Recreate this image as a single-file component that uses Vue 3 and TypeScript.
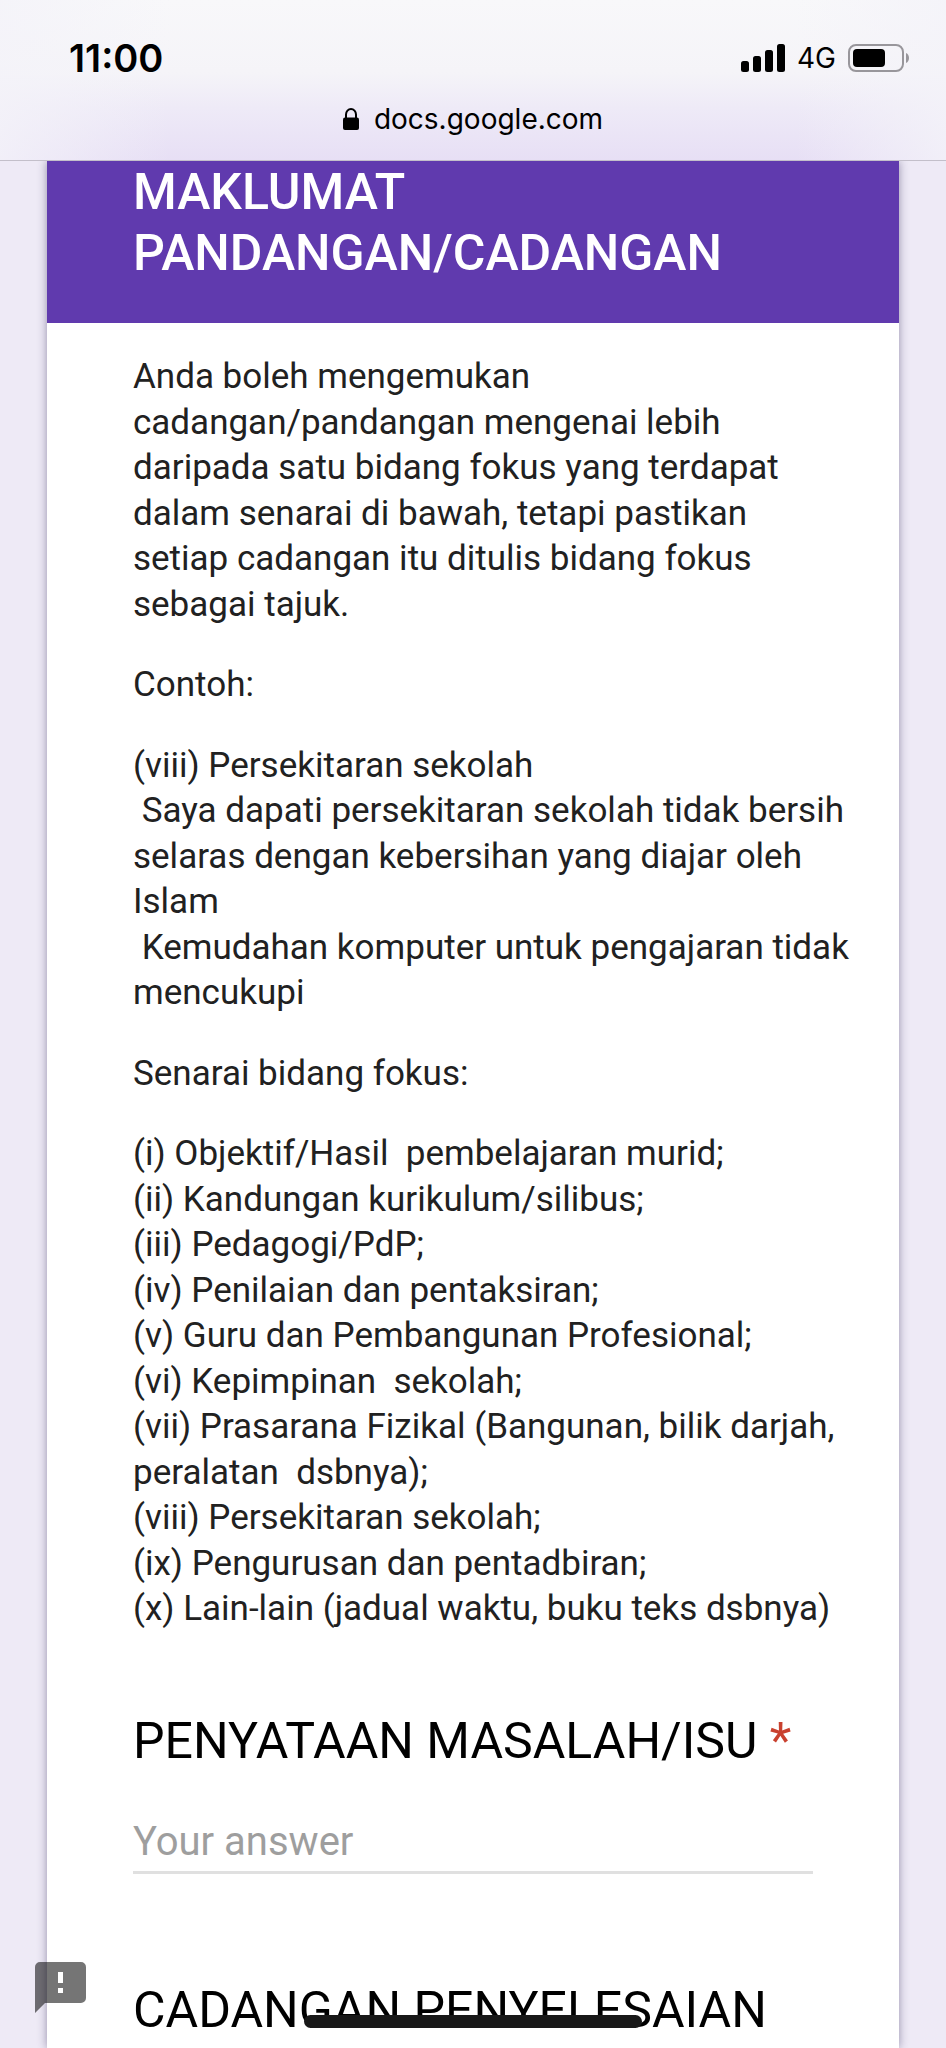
<script setup lang="ts">
import { ref } from 'vue'

interface Block {
  text: string
  narrow?: boolean
}

const blocks: Block[] = [
  {
    text: 'Anda boleh mengemukan cadangan/pandangan mengenai lebih daripada satu bidang fokus yang terdapat dalam senarai di bawah, tetapi pastikan setiap cadangan itu ditulis bidang fokus sebagai tajuk.',
    narrow: true,
  },
  { text: 'Contoh:' },
  {
    text: '(viii) Persekitaran sekolah\n Saya dapati persekitaran sekolah tidak bersih selaras dengan kebersihan yang diajar oleh Islam\n Kemudahan komputer untuk pengajaran tidak mencukupi',
  },
  { text: 'Senarai bidang fokus:' },
  {
    text: [
      '(i) Objektif/Hasil  pembelajaran murid;',
      '(ii) Kandungan kurikulum/silibus;',
      '(iii) Pedagogi/PdP;',
      '(iv) Penilaian dan pentaksiran;',
      '(v) Guru dan Pembangunan Profesional;',
      '(vi) Kepimpinan  sekolah;',
      '(vii) Prasarana Fizikal (Bangunan, bilik darjah, peralatan  dsbnya);',
      '(viii) Persekitaran sekolah;',
      '(ix) Pengurusan dan pentadbiran;',
      '(x) Lain-lain (jadual waktu, buku teks dsbnya)',
    ].join('\n'),
  },
]

const answer = ref('')
</script>

<template>
  <div class="screen">
    <header class="browser">
      <div class="status">
        <span class="clock">11:00</span>
        <div class="signals">
          <svg class="bars" width="44" height="28" viewBox="0 0 44 28" aria-hidden="true">
            <rect x="0" y="17" width="8" height="11" rx="2.5" />
            <rect x="12" y="12" width="8" height="16" rx="2.5" />
            <rect x="24" y="6" width="8" height="22" rx="2.5" />
            <rect x="36" y="0" width="8" height="28" rx="2.5" />
          </svg>
          <span class="network">4G</span>
          <svg width="62" height="28" viewBox="0 0 62 28" aria-hidden="true">
            <rect x="1" y="1" width="54" height="26" rx="7" fill="none" stroke="#98969b" stroke-width="2" />
            <rect x="5" y="5" width="32" height="18" rx="4" />
            <path d="M58 9c4 1.600 4 8.400 0 10z" fill="#98969b" />
          </svg>
        </div>
      </div>
      <div class="address">
        <svg width="16" height="22" viewBox="0 0 16 22" aria-hidden="true">
          <path d="M3 11V6.500a5 5.500 0 0 1 10 0V11" fill="none" stroke="#000" stroke-width="2" />
          <rect x="0" y="9.500" width="16" height="12.500" rx="2" />
        </svg>
        <span>docs.google.com</span>
      </div>
    </header>

    <main class="card">
      <h1 class="title">MAKLUMAT PANDANGAN/CADANGAN</h1>
      <div class="content">
        <div class="description">
          <p v-for="(block, i) in blocks" :key="i" :class="{ narrow: block.narrow }">{{ block.text }}</p>
        </div>
        <section class="question">
          <label class="heading" for="issue">PENYATAAN MASALAH/ISU <span class="required">*</span></label>
          <input id="issue" v-model="answer" class="answer" type="text" placeholder="Your answer" required />
        </section>
        <section class="question">
          <h2 class="heading">CADANGAN PENYELESAIAN</h2>
        </section>
      </div>
    </main>

    <button class="feedback" type="button" aria-label="Report a problem">
      <svg width="51" height="51" viewBox="0 0 51 51" aria-hidden="true">
        <path
          fill="#000"
          fill-opacity=".54"
          fill-rule="evenodd"
          d="M5 0H46a5 5 0 0 1 5 5V36a5 5 0 0 1-5 5H10L0 51V5a5 5 0 0 1 5-5z"
        />
        <path fill="#fff" d="M23 10h5v11h-5zM23 26h5v5h-5z" />
      </svg>
    </button>
    <div class="home-indicator"></div>
  </div>
</template>

<style>
body {
  background: #eeeaf6;
}
</style>

<style scoped>
.screen {
  min-height: 100vh;
  overflow: hidden;
  box-sizing: border-box;
  background: #eeeaf6;
  font-family: Roboto, sans-serif;
  color: #212121;
}

.browser {
  position: relative;
  z-index: 1;
  box-sizing: border-box;
  height: 161px;
  padding-top: 38px;
  border-bottom: 1px solid #c3bfca;
  background:
    linear-gradient(90deg, #f4f3f9cc 0, #f4f3f900 18%, #f4f3f900 84%, #f4f3f9cc 100%),
    linear-gradient(#f8f8fa 0, #f5f4f8 45%, #eeeaf7 68%, #e7dff5 100%);
  font-family: Inter, sans-serif;
  color: #000;
}

.status {
  display: flex;
  justify-content: space-between;
  align-items: center;
  height: 40px;
  padding: 0 36px 0 69px;
}

.clock {
  font-size: 38px;
  font-weight: 600;
}

.signals {
  display: flex;
  align-items: center;
  gap: 12px;
}

.network {
  font-size: 28px;
}

.address {
  display: flex;
  justify-content: center;
  align-items: center;
  gap: 15px;
  height: 36px;
  margin-top: 23px;
  font-size: 28px;
}

.card {
  margin: 0 47px;
  min-height: calc(100vh - 161px);
  background: #fff;
  box-shadow: 0 0 9px rgba(40, 30, 80, 0.45);
}

.title {
  margin: 0;
  padding: 1px 86px 39px;
  background: #603aae;
  color: #fff;
  font-size: 50px;
  line-height: 61px;
  font-weight: 500;
}

.content {
  padding: 31px 0 0 86px;
}

.description {
  margin-right: 40px;
  font-size: 35px;
  line-height: 1.3;
}

.description p {
  margin: 0 0 35px;
  white-space: pre-wrap;
}

.description .narrow {
  padding-right: 40px;
}

.question {
  margin: 79px 86px 0 0;
}

.heading {
  display: block;
  margin: 0;
  font-size: 50px;
  line-height: 61px;
  font-weight: 400;
  color: #000;
  white-space: nowrap;
}

.required {
  color: #c9412f;
}

.answer {
  display: block;
  box-sizing: border-box;
  width: 100%;
  height: 62px;
  margin: 40px 0 106px;
  padding: 0;
  border: 0;
  border-bottom: 3px solid #e0e0e0;
  background: transparent;
  color: #212121;
  font-family: inherit;
  font-size: 40px;
  outline: 0;
}

.answer::placeholder {
  color: #9e9e9e;
  opacity: 1;
}

.feedback {
  position: fixed;
  left: 35px;
  bottom: 35px;
  padding: 0;
  border: 0;
  background: none;
}

.feedback svg {
  display: block;
}

.home-indicator {
  position: fixed;
  left: 50%;
  bottom: 20px;
  width: 338px;
  height: 13px;
  margin-left: -169px;
  border-radius: 7px;
  background: #181818;
}
</style>
